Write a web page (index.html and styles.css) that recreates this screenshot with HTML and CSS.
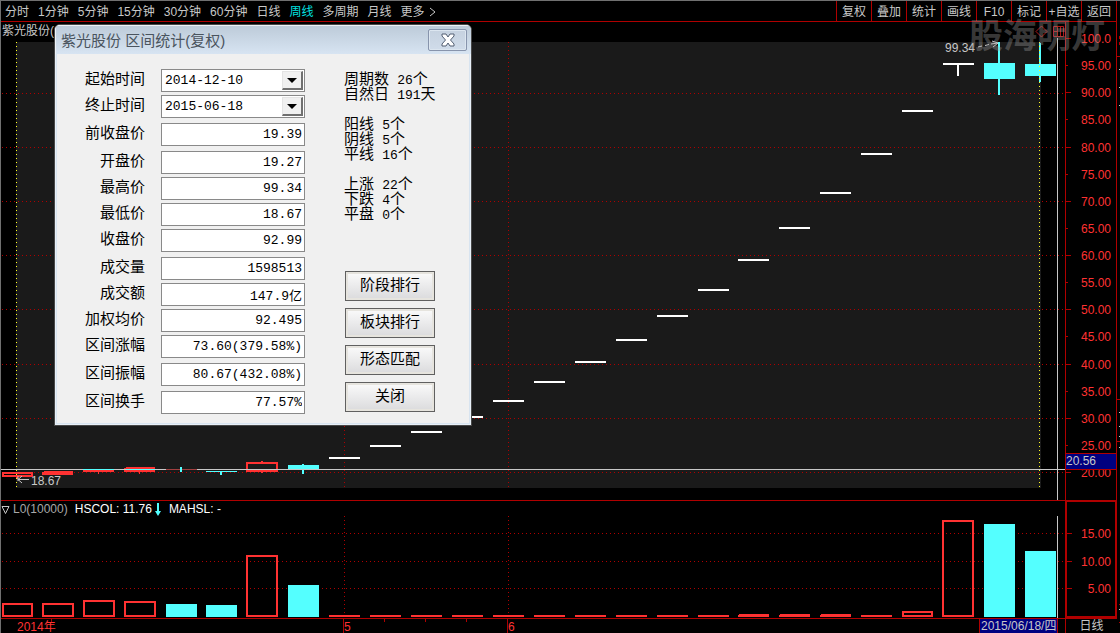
FILE: index.html
```html
<!DOCTYPE html>
<html lang="zh-CN">
<head>
<meta charset="utf-8">
<title>紫光股份 周线</title>
<link rel="stylesheet" href="styles.css">
</head>
<body>
<div class="app">
  <header class="toolbar">
    <nav class="periods">
      <a href="#">分时</a><a href="#">1分钟</a><a href="#">5分钟</a><a href="#">15分钟</a><a href="#">30分钟</a><a href="#">60分钟</a><a href="#">日线</a><a href="#" class="active">周线</a><a href="#">多周期</a><a href="#">月线</a><a href="#" class="more">更多<svg width="7" height="10" viewBox="0 0 7 10"><path d="M1 1L6 5L1 9" fill="none" stroke="currentColor"/></svg></a>
    </nav>
    <div class="tools">
      <button type="button">复权</button><button type="button">叠加</button><button type="button">统计</button><button type="button">画线</button><button type="button">F10</button><button type="button">标记</button><button type="button">+自选</button><button type="button">返回</button>
    </div>
  </header>

  <section class="pane price">
    <svg class="plot" viewBox="1 22 1064 478" preserveAspectRatio="none" shape-rendering="crispEdges">
      <rect class="range" x="16" y="42" width="1025" height="446"/>
      <path class="grid" d="M2 93.5H1065M2 147.5H1065M2 201.5H1065M2 255.5H1065M2 309.5H1065M2 364.5H1065M2 418.5H1065M2 472.5H1065M344.5 42V488M508.5 42V488"/>
      <g class="flat">
        <path d="M329 458H360M370 446H401M411 432H442M452 417H483M493 401H524M534 382H565M575 362H606M616 340H647M657 316H688M698 290H729M738 260H769M779 228H810M820 193H851M861 154H892M902 111H933M943 64H974M958 64V76"/>
      </g>
      <g class="up">
        <path d="M3 473H32V476H3ZM247 463H277V471H247ZM262 461V463M262 471V473M17 476V479"/>
        <path class="solid" d="M42 472H44V471H73V475H42ZM83 470H114V472H99V474H98V472H83ZM124 468H126V467H155V472H140V474H139V472H124Z"/>
      </g>
      <g class="down">
        <path d="M206 471H237V472H222V475H220V472H206ZM288 465H302V464H304V465H319V470H304V474H302V470H288ZM984 63H998V42H1000V63H1015V79H1000V95H998V79H984ZM1025 64H1039V43H1041V64H1056V76H1041V82H1039V76H1025Z"/>
      </g>
      <path class="cross" d="M1 469.5H1065M1057.5 38V500"/>
      <path class="cross-down" d="M83 469.5H114M126 469.5H155M180 469.5H182"/>
      <path class="cross-down wick" d="M181 467V472"/>
      <path class="cross-up" d="M166 469.5H180M182 469.5H197"/>
      <path class="bounds" d="M16.5 42V488M1039.5 42V488"/>
      <g class="pointer" shape-rendering="auto">
        <path d="M18 479.5H29M22 476L18 479.5L22 483M18 476V481"/>
        <path d="M978 47L982 46M985 45.5L989 44.5M991 44L998 43M992 41L998 43L993 47"/>
      </g>
      <g class="marker" shape-rendering="auto">
        <path d="M1041.500 26L1047 31.500L1041.500 37L1036 31.500Z"/>
        <path d="M1053.500 26.500H1063.500V36.500H1053.500ZM1057.500 27V36M1060.500 27V36M1053 31.500H1057"/>
      </g>
    </svg>
    <div class="stock-name">紫光股份(</div>
    <span class="note high">99.34</span>
    <span class="note low">18.67</span>
  </section>
  <aside class="axis price-axis">
    <span class="major">100.0</span><span>95.00</span><span class="major">90.00</span><span>85.00</span><span class="major">80.00</span><span>75.00</span><span class="major">70.00</span><span>65.00</span><span class="major">60.00</span><span>55.00</span><span class="major">50.00</span><span>45.00</span><span class="major">40.00</span><span>35.00</span><span class="major">30.00</span><span>25.00</span><span class="major">20.00</span>
    <output class="price-tag">20.56</output>
  </aside>

  <section class="pane volume">
    <svg class="plot" viewBox="1 501 1064 117" preserveAspectRatio="none" shape-rendering="crispEdges">
      <path class="grid" d="M2 533.5H1065M2 561.5H1065M2 588.5H1065M344.5 516V616M508.5 516V616"/>
      <path class="up hollow" d="M3 604H32V616H3ZM43 604H73V616H43ZM84 601H114V616H84ZM125 602H155V616H125ZM247 556H277V616H247ZM903 612H932V616H903ZM943 521H973V616H943Z"/>
      <path class="up" d="M329 616H360M370 616H401M411 616H442M452 616H483M493 616H524M534 616H565M575 616H606M616 616H647M657 616H688M698 616H729M738 616H769M739 615H769M779 616H810M780 615H810M820 616H851M821 615H851M861 616H892"/>
      <path class="down" d="M166 604H197V617H166ZM206 605H237V617H206ZM288 585H319V617H288ZM984 524H1015V617H984ZM1025 551H1056V617H1025Z"/>
      <path class="cross" d="M1057.5 516V618"/>
    </svg>
    <div class="indicator">
      <svg width="10" height="10" viewBox="0 0 10 10"><path d="M1 1.500H8L4.500 8.500Z" fill="none" stroke="#c8c8c8"/></svg>
      <span class="dim">L0(10000)</span>
      <span class="col">HSCOL: 11.76</span>
      <svg class="arrow-down" width="6" height="13" viewBox="0 0 6 13"><path d="M2 0H4V8H6L3 13L0 8H2Z" fill="#54ffff"/></svg>
      <span>MAHSL: -</span>
    </div>
  </section>
  <aside class="axis volume-axis"><span class="major">15.00</span><span class="major">10.00</span><span class="major">5.00</span></aside>

  <footer class="timeline">
    <svg class="plot" viewBox="1 619 1064 14" preserveAspectRatio="none" shape-rendering="crispEdges"><path class="tick" d="M51.5 619V622M343.5 619V633M384.5 619V622M425.5 619V622M466.5 619V622M507.5 619V633"/></svg>
    <span class="month first">2014年</span><span class="month may">5</span><span class="month june">6</span>
    <time class="date-tag" datetime="2015-06-18">2015/06/18/四</time>
  </footer>
  <div class="period-name">日线</div>

  <svg class="edge" viewBox="0 0 3 611" preserveAspectRatio="none" shape-rendering="crispEdges">
    <path stroke="#b00000" d="M0 34.5H3M0 377.5H3M0 419.5H3M2 582.5H3M2 600.5H3M2.5 14V17M2.5 20V23"/>
    <path stroke="#c8c8c8" d="M2 47.5H3M2 65.5H3M2 83.5H3M2 390.5H3M2 404.5H3M2 414.5H3M2 425.5H3M2 587.5H3"/>
  </svg>
  <div class="watermark">股海明灯</div>

  <section class="dialog" role="dialog" aria-labelledby="dialog-title">
    <header class="titlebar">
      <h1 id="dialog-title">紫光股份 区间统计(复权)</h1>
      <button type="button" class="close" aria-label="关闭窗口">
        <svg width="16" height="14" viewBox="0 0 16 14"><path d="M2 1H6L8 4L10 1H14V3L10.500 7L14 11V13H10L8 10L6 13H2V11L5.500 7L2 3Z" fill="#fff" stroke="#535f72"/></svg>
      </button>
    </header>
    <form class="content">
      <div class="fields">
        <div class="group">
          <label for="start">起始时间</label>
          <div class="combo"><select id="start"><option>2014-12-10</option></select><span class="drop"></span></div>
          <label for="end">终止时间</label>
          <div class="combo"><select id="end"><option>2015-06-18</option></select><span class="drop"></span></div>
        </div>
        <div class="group">
          <label for="prev">前收盘价</label><input id="prev" value="19.39" readonly>
        </div>
        <div class="group">
          <label for="open">开盘价</label><input id="open" value="19.27" readonly>
          <label for="high">最高价</label><input id="high" value="99.34" readonly>
          <label for="low">最低价</label><input id="low" value="18.67" readonly>
          <label for="last">收盘价</label><input id="last" value="92.99" readonly>
        </div>
        <div class="group">
          <label for="vol">成交量</label><input id="vol" value="1598513" readonly>
          <label for="amount">成交额</label><input id="amount" value="147.9亿" readonly>
          <label for="avg">加权均价</label><input id="avg" value="92.495" readonly>
          <label for="gain">区间涨幅</label><input id="gain" value="73.60(379.58%)" readonly>
        </div>
        <div class="group">
          <label for="swing">区间振幅</label><input id="swing" value="80.67(432.08%)" readonly>
        </div>
        <div class="group">
          <label for="turn">区间换手</label><input id="turn" value="77.57%" readonly>
        </div>
      </div>
      <div class="side">
        <div class="counts">
          <p>周期数 <b>26</b>个<br>自然日 <b>191</b>天</p>
          <p>阳线 <b>5</b>个<br>阴线 <b>5</b>个<br>平线 <b>16</b>个</p>
          <p>上涨 <b>22</b>个<br>下跌 <b>4</b>个<br>平盘 <b>0</b>个</p>
        </div>
        <div class="actions">
          <button type="button">阶段排行</button>
          <button type="button">板块排行</button>
          <button type="button">形态匹配</button>
          <button type="button">关闭</button>
        </div>
      </div>
    </form>
  </section>
</div>
</body>
</html>
```
FILE: styles.css
```css
* { box-sizing: border-box; }

body {
  margin: 0;
  background: #000;
  color: #c8c8c8;
  font: 12px/15px "Liberation Sans", "Noto Sans CJK SC", sans-serif;
}

button, input, select { font: inherit; color: inherit; border-radius: 0; }

.app {
  position: relative;
  display: grid;
  grid-template-columns: minmax(0, 1fr) 52px 3px;
  grid-template-rows: auto minmax(0, 478fr) minmax(0, 118fr) auto;
  height: 100vh;
  min-height: 480px;
  overflow: hidden;
  border-top: 1px solid #707070;
  border-left: 1px solid #707070;
}

/* Toolbar */
.toolbar {
  grid-column: 1 / 3;
  display: flex;
  justify-content: space-between;
  height: 21px;
  border-bottom: 1px solid #b00000;
}
.periods { display: flex; align-items: center; gap: 9px; padding: 2px 0 0 4px; white-space: nowrap; }
.periods a { color: #c8c8c8; text-decoration: none; }
.periods .active { color: #00e0e0; }
.more { display: flex; align-items: center; gap: 4px; }
.tools { display: flex; border-right: 1px solid #b00000; }
.tools button {
  width: 35px;
  padding: 2px 0 0;
  border: 0;
  border-left: 1px solid #b00000;
  background: none;
  white-space: nowrap;
}

/* Chart panes */
.pane, .timeline { position: relative; grid-column: 1; }
.plot { position: absolute; inset: 0; width: 100%; height: 100%; }
.range { fill: #1a1a1a; }
.grid { stroke: #b00000; stroke-dasharray: 1 3; fill: none; }
.bounds { stroke: #ffff20; stroke-dasharray: 1 3; }
.flat { stroke: #fff; stroke-width: 2; }
.up { stroke: #ff3232; stroke-width: 2; fill: none; }
.up .solid { fill: #ff3232; stroke: none; }
.down { fill: #54ffff; }
.cross { stroke: #c8c8c8; }
.cross-down { stroke: #54ffff; }
.wick { stroke-width: 2; }
.cross-up { stroke: #a04040; }
.pointer { stroke: #c8c8c8; fill: none; }
.marker { stroke: #b01818; fill: none; }
.tick { stroke: #b00000; }
.stock-name { position: relative; padding: 2px 1px; }
.note { position: absolute; }
.note.high { right: 90px; top: 19px; }
.note.low { left: 30px; bottom: 11px; }
.volume { border-top: 1px solid #b00000; }
.indicator { position: relative; display: flex; align-items: center; padding-top: 1px; color: #fff; white-space: nowrap; }
.indicator .dim { color: #a8a8a8; margin-left: 2px; }
.indicator .col { margin-left: 7px; }
.indicator .arrow-down { margin: 0 8px 0 3px; }

/* Value axes */
.axis {
  position: relative;
  grid-column: 2;
  display: flex;
  flex-direction: column;
  justify-content: space-between;
  color: #ff3232;
  text-align: right;
}
.axis span { position: relative; padding-right: 5px; }
.axis span::before {
  content: "";
  position: absolute;
  left: 0;
  top: 6px;
  width: 2px;
  height: 1px;
  background: #b00000;
}
.axis .major::before { width: 5px; }
.price-axis { padding: 10px 0 19px; border: solid #b00000; border-width: 0 1px; }
.price-tag {
  position: absolute;
  left: 0;
  right: 0;
  bottom: 30px;
  height: 17px;
  border: solid #b00000;
  border-width: 1px 0;
  background: #000080;
  color: #c8c8c8;
  text-align: left;
}
.volume-axis { padding: 25px 0 19px; border: 2px solid #b00000; }
.volume-axis span { padding-right: 4px; }

/* Time axis */
.timeline { height: 15px; border-top: 1px solid #b00000; color: #ff3232; }
.month { position: absolute; top: 1px; }
.first { left: 16px; }
.may { left: 343px; }
.june { left: 507px; }
.date-tag {
  position: absolute;
  right: 7px;
  top: 0;
  width: 79px;
  height: 14px;
  padding-left: 1px;
  border: solid #b00000;
  border-width: 0 1px;
  background: #000080;
  color: #c8c8c8;
  white-space: nowrap;
}
.period-name {
  grid-column: 2;
  height: 15px;
  border-top: 1px solid #b00000;
  border-left: 1px solid #b00000;
  text-align: center;
}
.edge { grid-column: 3; grid-row: 2 / 5; width: 100%; height: 100%; }
.watermark {
  position: absolute;
  right: 15px;
  top: 14px;
  color: rgba(160, 160, 160, .36);
  font: bold 34px/38px "Noto Sans CJK SC", sans-serif;
  pointer-events: none;
}

/* Statistics dialog */
.dialog {
  position: absolute;
  left: 53px;
  top: 23px;
  width: 418px;
  overflow: hidden;
  border: 1px solid #484848;
  border-radius: 6px 6px 1px 1px;
  background: #f0f0f0;
  box-shadow: inset 0 0 0 1px #e8f0f8, inset 0 0 0 2px #d8e4f0;
  color: #000;
  font-size: 15px;
}
.titlebar {
  display: flex;
  justify-content: space-between;
  height: 29px;
  padding: 4px 4px 3px 6px;
  background: linear-gradient(#bccad8, #d7e4f2);
  box-shadow: inset 1px 1px #eef3f8;
}
.titlebar h1 { margin: 0; color: #4a545e; font: inherit; line-height: 24px; }
.close {
  display: grid;
  place-items: center;
  width: 39px;
  height: 22px;
  padding: 0;
  border: 1px solid #8794ac;
  border-radius: 2px;
  background: linear-gradient(#c5d1df, #d0dcea);
  box-shadow: inset 0 0 0 1px #dce6f0;
}
.content { display: flex; gap: 39px; padding: 15px 16px 11px 30px; }
.fields { display: grid; gap: 5px; }
.group { display: grid; grid-template-columns: 60px 144px; gap: 3px 16px; }
.group label { padding-bottom: 4px; line-height: 19px; text-align: right; }
.group input, .group select {
  width: 100%;
  height: 23px;
  padding: 0 2px;
  border: 1px solid #898989;
  background: #fff;
  font: 13px/20px "Liberation Mono", "Noto Sans CJK SC", monospace;
}
.group input { text-align: right; }
.group select { appearance: none; padding: 1px 3px 0; }
.combo { position: relative; height: 23px; }
.drop {
  position: absolute;
  right: 2px;
  top: 2px;
  width: 21px;
  height: 19px;
  border: solid;
  border-width: 1px 2px 2px 1px;
  border-color: #e4e4e4 #707070 #707070 #e4e4e4;
  background: #f0f0f0;
  pointer-events: none;
}
.drop::after {
  content: "";
  position: absolute;
  left: 4px;
  top: 6px;
  border: 5px solid transparent;
  border-top-color: #000;
  border-bottom: 0;
}
.side { display: flex; flex-direction: column; justify-content: space-between; }
.counts p { margin: 0 0 15px; white-space: nowrap; line-height: 15px; }
.counts p:first-child { margin-top: 2px; }
.counts b { font: 13px/1 "Liberation Mono", monospace; line-height: 0; margin-left: 4px; }
.actions { display: grid; gap: 7px; width: 91px; padding: 0 0 2px 1px; }
.actions button {
  height: 30px;
  padding: 0 0 2px;
  border: 1px solid #606060;
  background: linear-gradient(#fbfbfb, #dadadc);
  box-shadow: inset 0 0 0 2px #e6e4de;
  line-height: 20px;
}
```
